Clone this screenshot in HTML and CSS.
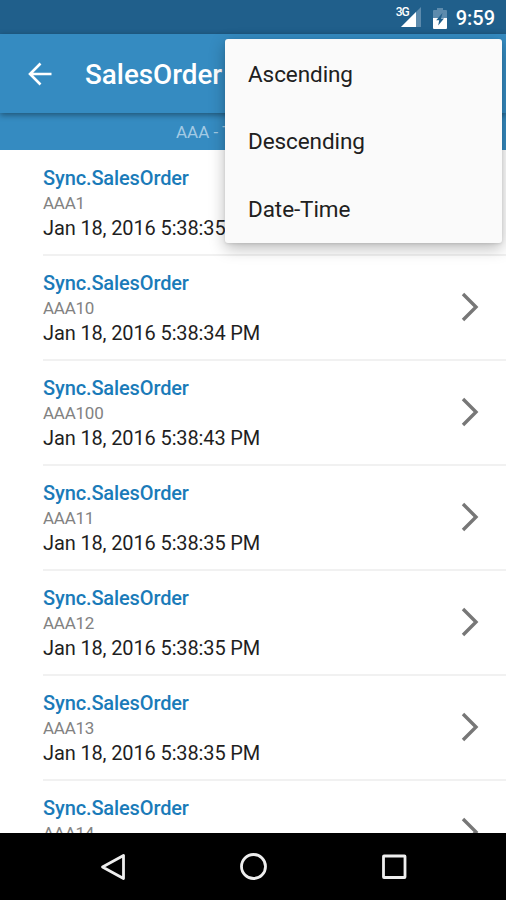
FILE: index.html
```html
<!DOCTYPE html>
<html lang="en">
<head>
<meta charset="utf-8">
<title>SalesOrder</title>
<link rel="stylesheet" href="styles.css">
</head>
<body>
<div class="screen">
  <header class="status">
    <span class="network">3G</span>
    <svg class="signal" width="20" height="20" viewBox="0 0 20 20"><path d="M20 0V20H0Z" fill="#5d8bad"/><path d="M15 5V20H0Z" fill="#fff"/></svg>
    <svg class="battery" width="14" height="21" viewBox="0 0 14 21"><path d="M4 0H10V2H13Q14 2 14 3V10H0V3Q0 2 1 2H4Z" fill="#5d8bad"/><path d="M0 10H14V20Q14 21 13 21H1Q0 21 0 20Z" fill="#fff"/><path d="M9.5 5L3.2 12.2H6.2L5.2 17.5L11 10.5H8Z" fill="#205f8b"/></svg>
    <span class="clock">9:59</span>
  </header>
  <div class="toolbar">
    <svg class="back" width="24" height="24" viewBox="0 0 24 24"><path d="M23.5 12H2M12.5 1.5L2 12L12.5 22.5" fill="none" stroke="#fff" stroke-width="2.6"/></svg>
    <h1 class="title">SalesOrder</h1>
  </div>
  <div class="subheader">AAA - T</div>
  <main class="list">
    <article class="row"><div class="info"><h2>Sync.SalesOrder</h2><p class="code">AAA1</p><p class="date">Jan 18, 2016 5:38:35 PM</p></div><svg class="chevron" width="18" height="30" viewBox="0 0 18 30"><path d="M2 2L15 15L2 28"/></svg></article>
    <article class="row"><div class="info"><h2>Sync.SalesOrder</h2><p class="code">AAA10</p><p class="date">Jan 18, 2016 5:38:34 PM</p></div><svg class="chevron" width="18" height="30" viewBox="0 0 18 30"><path d="M2 2L15 15L2 28"/></svg></article>
    <article class="row"><div class="info"><h2>Sync.SalesOrder</h2><p class="code">AAA100</p><p class="date">Jan 18, 2016 5:38:43 PM</p></div><svg class="chevron" width="18" height="30" viewBox="0 0 18 30"><path d="M2 2L15 15L2 28"/></svg></article>
    <article class="row"><div class="info"><h2>Sync.SalesOrder</h2><p class="code">AAA11</p><p class="date">Jan 18, 2016 5:38:35 PM</p></div><svg class="chevron" width="18" height="30" viewBox="0 0 18 30"><path d="M2 2L15 15L2 28"/></svg></article>
    <article class="row"><div class="info"><h2>Sync.SalesOrder</h2><p class="code">AAA12</p><p class="date">Jan 18, 2016 5:38:35 PM</p></div><svg class="chevron" width="18" height="30" viewBox="0 0 18 30"><path d="M2 2L15 15L2 28"/></svg></article>
    <article class="row"><div class="info"><h2>Sync.SalesOrder</h2><p class="code">AAA13</p><p class="date">Jan 18, 2016 5:38:35 PM</p></div><svg class="chevron" width="18" height="30" viewBox="0 0 18 30"><path d="M2 2L15 15L2 28"/></svg></article>
    <article class="row"><div class="info"><h2>Sync.SalesOrder</h2><p class="code">AAA14</p></div><svg class="chevron" width="18" height="30" viewBox="0 0 18 30"><path d="M2 2L15 15L2 28"/></svg></article>
  </main>
  <nav class="navbar">
    <svg width="28" height="28" viewBox="0 0 28 28"><path d="M24.5 2.5V25.5L3.5 14Z"/></svg>
    <svg width="28" height="28" viewBox="0 0 28 28"><circle cx="14.5" cy="13.5" r="12"/></svg>
    <svg width="28" height="28" viewBox="0 0 28 28"><rect x="3.5" y="3" width="21.5" height="21.5" rx=".5"/></svg>
  </nav>
  <div class="menu">
    <div class="item">Ascending</div>
    <div class="item">Descending</div>
    <div class="item">Date-Time</div>
  </div>
</div>
</body>
</html>
```
FILE: styles.css
```css
* { box-sizing: border-box; }
body { margin: 0; font-family: Roboto, "Liberation Sans", sans-serif; }
h1, h2, p { margin: 0; }
svg { display: block; flex: none; }
.screen { position: relative; display: flex; flex-direction: column; width: 506px; height: 900px; overflow: hidden; background: #fff; }
.status { display: flex; flex: none; height: 34px; padding: 7px 11px 0 0; justify-content: flex-end; background: #205f8b; color: #fff; }
.network { font-size: 12px; line-height: 11px; font-weight: 500; letter-spacing: -1px; margin-right: -8px; z-index: 1; }
.signal { margin-right: 12px; }
.battery { margin: 1px 9px 0 0; }
.clock { font-size: 20px; line-height: 22px; font-weight: 500; }
.toolbar { display: flex; flex: none; align-items: center; height: 79px; padding-left: 28px; background: #358bc1; box-shadow: 0 2px 6px rgba(0, 0, 0, .4); z-index: 1; }
.title { margin: 2px 0 0 33px; color: #fff; font-size: 27.8px; line-height: 32px; font-weight: 500; }
.subheader { flex: none; height: 37px; padding: 1px 0 0 176px; background: #358bc1; color: #a3cae4; font-size: 17px; line-height: 37px; }
.list { flex: 1; min-height: 0; overflow: hidden; padding-top: 1px; }
.row { display: flex; justify-content: space-between; height: 105px; margin-left: 43px; padding: 14px 27px 0 0; border-bottom: 2px solid #f1f1f1; }
h2 { color: #1a7bb9; font-size: 20px; line-height: 26px; font-weight: 500; letter-spacing: -.13px; }
.code { color: #828282; font-size: 17px; line-height: 24px; letter-spacing: -.25px; }
.date { color: #1f1f1f; font-size: 20px; line-height: 26px; letter-spacing: -.13px; }
.chevron { margin-top: 27px; }
.row .chevron { margin-top: 22px; }
.chevron path { fill: none; stroke: #777; stroke-width: 3.4; }
.navbar { display: grid; flex: none; grid-template-columns: repeat(3, 28px); column-gap: 112.5px; justify-content: center; align-items: center; height: 67px; background: #000; }
.navbar path, .navbar circle, .navbar rect { fill: none; stroke: #eee; stroke-width: 2.8; stroke-linejoin: round; }
.menu { position: absolute; z-index: 2; top: 39px; left: 225px; width: 277px; height: 204px; padding-top: 2px; border-radius: 3px; background: #fafafa; box-shadow: 0 5px 16px rgba(0, 0, 0, .28), 0 1px 3px rgba(0, 0, 0, .1); }
.item { height: 67.3px; padding-left: 23px; color: #202020; font-size: 22.5px; line-height: 67.3px; letter-spacing: -.08px; }
```
